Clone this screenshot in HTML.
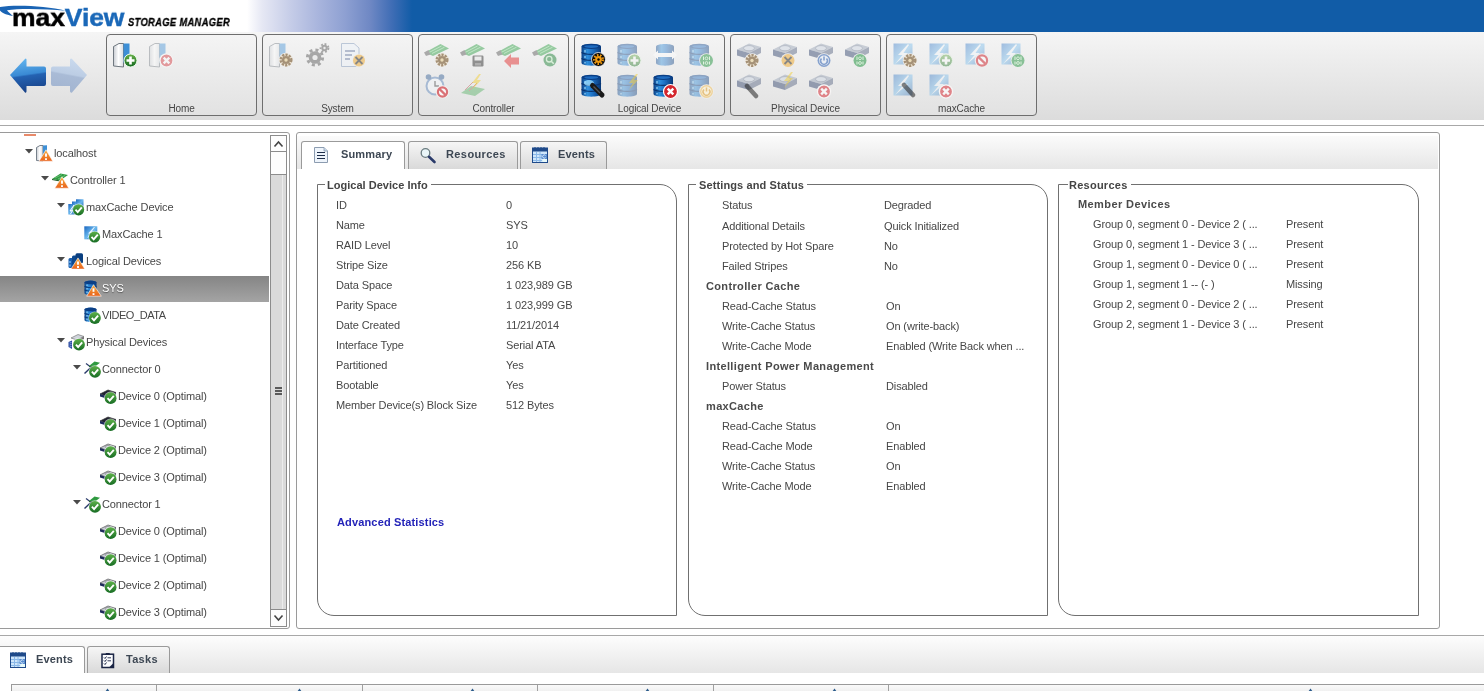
<!DOCTYPE html><html><head><meta charset="utf-8"><title>maxView Storage Manager</title>
<style>
html,body{margin:0;padding:0;}
body{width:1484px;height:691px;overflow:hidden;position:relative;background:#fff;font-family:"Liberation Sans",sans-serif;}
.a{position:absolute;box-sizing:border-box;}
.t{position:absolute;line-height:0;white-space:nowrap;font-family:"Liberation Sans",sans-serif;will-change:transform;}
.ic{position:absolute;overflow:visible;}
</style></head><body>
<svg width="0" height="0" style="position:absolute">
<defs>
<linearGradient id="gdb" x1="0" x2="1" y1="0" y2="0"><stop offset="0" stop-color="#0a3f85"/><stop offset=".3" stop-color="#2f8fdc"/><stop offset=".55" stop-color="#1e72c6"/><stop offset="1" stop-color="#083878"/></linearGradient>
<linearGradient id="gtile" x1="0" x2="1" y1="0" y2="1"><stop offset="0" stop-color="#1a66c0"/><stop offset=".5" stop-color="#6ab8ee"/><stop offset="1" stop-color="#1a5aa8"/></linearGradient>
<linearGradient id="gdoor" x1="0" x2="1" y1="0" y2="0"><stop offset="0" stop-color="#c8ccd2"/><stop offset=".5" stop-color="#ffffff"/><stop offset="1" stop-color="#d8dce0"/></linearGradient>
<linearGradient id="ggreen" x1="0" x2="0" y1="0" y2="1"><stop offset="0" stop-color="#6ab04a"/><stop offset="1" stop-color="#146a20"/></linearGradient>
<linearGradient id="gchk" x1="0" x2="0" y1="0" y2="1"><stop offset="0" stop-color="#5cb048"/><stop offset="1" stop-color="#176c24"/></linearGradient>
<linearGradient id="gwarn" x1="0" x2="0" y1="0" y2="1"><stop offset="0" stop-color="#f8b040"/><stop offset="1" stop-color="#e8601a"/></linearGradient>
<linearGradient id="gback" x1="0.45" x2="0.6" y1="0" y2="1"><stop offset="0" stop-color="#62b4ee"/><stop offset=".45" stop-color="#3a8ad4"/><stop offset=".5" stop-color="#2462b2"/><stop offset="1" stop-color="#173f84"/></linearGradient>
<linearGradient id="gfwd" x1="0.6" x2="0.4" y1="0" y2="1"><stop offset="0" stop-color="#cadaee"/><stop offset=".45" stop-color="#bccde4"/><stop offset=".5" stop-color="#a9bbd6"/><stop offset="1" stop-color="#a2b4d0"/></linearGradient>
</defs></svg>

<div class="a" style="left:0;top:0;width:1484px;height:32px;background:linear-gradient(to right,#fff 0,#fff 247px,#e6e8f4 262px,#c6cde8 290px,#a9b5dd 318px,#8ea0d2 345px,#6f88c4 370px,#3f6db5 392px,#115ca7 412px,#115ca7 100%)"></div>
<svg class="ic" style="left:0;top:5px" width="80" height="14" viewBox="0 0 80 14"><path d="M0 2 C16 -0.5 46 1 66 5.8 C46 3.8 20 3.2 7 5.2 C8.5 7 10.5 9 13 11 C5 9.5 1.5 7.5 0 5.5 Z" fill="#1a64b4"/></svg>
<div class="t" style="left:12px;top:17px;font-size:26px;font-weight:bold;color:#000;letter-spacing:-0.1px;-webkit-text-stroke-width:0.5px;transform:scale(1.02,0.95);transform-origin:0 9px">max<span style="color:#1a68b8">View</span></div>
<div class="t" style="left:128px;top:22px;font-size:11px;font-weight:bold;font-style:italic;color:#000;-webkit-text-stroke-width:0.3px;letter-spacing:0.4px;transform:scaleX(0.85);transform-origin:0 0">STORAGE MANAGER</div>
<div class="a" style="left:0;top:32px;width:1484px;height:88px;background:linear-gradient(#f5f5f5,#dcdcdc)"></div>
<div class="a" style="left:0;top:125px;width:1484px;height:1px;background:#a8a8a8"></div>
<svg class="ic" style="left:9px;top:58px" width="80" height="36" viewBox="0 0 80 36"><path d="M1 17 L16 1 Q17 0 17.5 1.5 L17.5 8.5 L35 8.5 Q37 8.5 37 10.5 L37 26 Q37 28 35 28 L17.5 28 L17.5 33.5 Q17 35.5 16 34.5 Z" fill="url(#gback)"/><path d="M42 10.5 Q42 8.5 44 8.5 L61 8.5 L61 1.5 Q62 0 63 1 L78 17 L63 34.5 Q62 35.5 61 33.5 L61 28 L44 28 Q42 28 42 26 Z" fill="url(#gfwd)"/></svg>
<div class="a" style="left:106px;top:34px;width:151px;height:82px;border:1px solid #6e6e6e;border-radius:4px;background:linear-gradient(#f4f4f4,#e2e2e2)"></div>
<div class="t" style="left:106px;top:109px;width:151px;text-align:center;font-size:10px;letter-spacing:-0.12px;color:#454545">Home</div>
<div class="a" style="left:262px;top:34px;width:151px;height:82px;border:1px solid #6e6e6e;border-radius:4px;background:linear-gradient(#f4f4f4,#e2e2e2)"></div>
<div class="t" style="left:262px;top:109px;width:151px;text-align:center;font-size:10px;letter-spacing:-0.12px;color:#454545">System</div>
<div class="a" style="left:418px;top:34px;width:151px;height:82px;border:1px solid #6e6e6e;border-radius:4px;background:linear-gradient(#f4f4f4,#e2e2e2)"></div>
<div class="t" style="left:418px;top:109px;width:151px;text-align:center;font-size:10px;letter-spacing:-0.12px;color:#454545">Controller</div>
<div class="a" style="left:574px;top:34px;width:151px;height:82px;border:1px solid #6e6e6e;border-radius:4px;background:linear-gradient(#f4f4f4,#e2e2e2)"></div>
<div class="t" style="left:574px;top:109px;width:151px;text-align:center;font-size:10px;letter-spacing:-0.12px;color:#454545">Logical Device</div>
<div class="a" style="left:730px;top:34px;width:151px;height:82px;border:1px solid #6e6e6e;border-radius:4px;background:linear-gradient(#f4f4f4,#e2e2e2)"></div>
<div class="t" style="left:730px;top:109px;width:151px;text-align:center;font-size:10px;letter-spacing:-0.12px;color:#454545">Physical Device</div>
<div class="a" style="left:886px;top:34px;width:151px;height:82px;border:1px solid #6e6e6e;border-radius:4px;background:linear-gradient(#f4f4f4,#e2e2e2)"></div>
<div class="t" style="left:886px;top:109px;width:151px;text-align:center;font-size:10px;letter-spacing:-0.12px;color:#454545">maxCache</div>
<svg class="ic" style="left:113px;top:43px" width="24" height="24" viewBox="0 0 24 24"><g opacity="1"><path d="M0.5 3.5 L6 0.5 L10.5 0.5 L10.5 24 L0.5 23 Z" fill="url(#gdoor)" stroke="#707880" stroke-width="1"/><path d="M10.5 0.5 L16.5 0.5 L16.5 17 L10.5 20 Z" fill="#3d8fd6"/></g><g opacity="1"><circle cx="17.5" cy="17.5" r="6.5" fill="url(#ggreen)" stroke="#e8f8e8" stroke-width="1"/><path d="M13.5 17.5 H21.5 M17.5 13.5 V21.5" stroke="#fff" stroke-width="2.6"/></g></svg>
<svg class="ic" style="left:149px;top:43px" width="24" height="24" viewBox="0 0 24 24"><g opacity="0.42"><path d="M0.5 3.5 L6 0.5 L10.5 0.5 L10.5 24 L0.5 23 Z" fill="url(#gdoor)" stroke="#707880" stroke-width="1"/><path d="M10.5 0.5 L16.5 0.5 L16.5 17 L10.5 20 Z" fill="#3d8fd6"/></g><circle cx="17.5" cy="17.5" r="7.3" fill="#ededed"/><g opacity="0.42"><circle cx="17.5" cy="17.5" r="6.5" fill="#d4262e" stroke="#fff" stroke-width="1.2"/><path d="M14.7 14.7 L20.3 20.3 M20.3 14.7 L14.7 20.3" stroke="#fff" stroke-width="2.4"/></g></svg>
<svg class="ic" style="left:269px;top:43px" width="24" height="24" viewBox="0 0 24 24"><g opacity="0.42"><path d="M0.5 3.5 L6 0.5 L10.5 0.5 L10.5 24 L0.5 23 Z" fill="url(#gdoor)" stroke="#707880" stroke-width="1"/><path d="M10.5 0.5 L16.5 0.5 L16.5 17 L10.5 20 Z" fill="#3d8fd6"/></g><circle cx="17" cy="17" r="7.3" fill="#ededed"/><g opacity="0.62"><circle cx="17" cy="17" r="6.5" fill="#f0d8b0" opacity=".7"/><circle cx="17" cy="17" r="5.3" fill="none" stroke="#7a5a30" stroke-width="2.4" stroke-dasharray="2.2 1.2"/><circle cx="17" cy="17" r="4.1" fill="#7a5a30"/><circle cx="17" cy="17" r="1.7" fill="#e9d29a"/></g></svg>
<svg class="ic" style="left:305px;top:43px" width="24" height="24" viewBox="0 0 24 24"><g opacity="0.54"><circle cx="10" cy="14.5" r="6.3" fill="#6a6a6a"/><circle cx="10" cy="14.5" r="7.6" fill="none" stroke="#6a6a6a" stroke-width="3" stroke-dasharray="3 3"/><circle cx="10" cy="14.5" r="2.6" fill="#e8e8e8"/><circle cx="19.5" cy="5" r="3.2" fill="#6a6a6a"/><circle cx="19.5" cy="5" r="3.9" fill="none" stroke="#6a6a6a" stroke-width="2" stroke-dasharray="1.8 1.8"/><circle cx="19.5" cy="5" r="1.2" fill="#e8e8e8"/></g></svg>
<svg class="ic" style="left:341px;top:43px" width="24" height="24" viewBox="0 0 24 24"><g opacity="0.52"><path d="M0.5 0.5 H13 L18 5 V23.5 H0.5 Z" fill="#eef3fa" stroke="#8aa0c0" stroke-width="1"/><path d="M4 8 H14 M4 12 H11 M4 16 H9" stroke="#5a6e98" stroke-width="1.5"/></g><circle cx="18" cy="17.5" r="6.8" fill="#ededed"/><g opacity="0.57"><circle cx="18" cy="17.5" r="6" fill="#f0b040"/><path d="M14.5 14.0 L21.5 21.0 M21.5 14.0 L14.5 21.0" stroke="#3a3a3a" stroke-width="1.8"/></g></svg>
<svg class="ic" style="left:425px;top:43px" width="24" height="24" viewBox="0 0 24 24"><g opacity="0.52"><path d="M0 9.5 L15.5 1 L24 5.5 L8 13 Z" fill="#44a858"/><path d="M4 9.5 L16.5 3 M7 10.5 L19.5 4.2" stroke="#a8e8b0" stroke-width=".8"/><path d="M-1 9.5 L3.5 7 L5.5 11.5 L1 13 Z" fill="#6a6a6a"/></g><circle cx="17" cy="17" r="7.3" fill="#ededed"/><g opacity="0.62"><circle cx="17" cy="17" r="6.5" fill="#f0d8b0" opacity=".7"/><circle cx="17" cy="17" r="5.3" fill="none" stroke="#7a5a30" stroke-width="2.4" stroke-dasharray="2.2 1.2"/><circle cx="17" cy="17" r="4.1" fill="#7a5a30"/><circle cx="17" cy="17" r="1.7" fill="#e9d29a"/></g></svg>
<svg class="ic" style="left:461px;top:43px" width="24" height="24" viewBox="0 0 24 24"><g opacity="0.52"><path d="M0 9.5 L15.5 1 L24 5.5 L8 13 Z" fill="#44a858"/><path d="M4 9.5 L16.5 3 M7 10.5 L19.5 4.2" stroke="#a8e8b0" stroke-width=".8"/><path d="M-1 9.5 L3.5 7 L5.5 11.5 L1 13 Z" fill="#6a6a6a"/></g><g opacity="0.52"><rect x="11.5" y="12.5" width="11" height="11" rx="1.2" fill="#3a3a3a"/><rect x="13.5" y="13.5" width="7" height="4" fill="#e8e8e8"/><rect x="14" y="20" width="6" height="2.5" fill="#777"/></g></svg>
<svg class="ic" style="left:497px;top:43px" width="24" height="24" viewBox="0 0 24 24"><g opacity="0.52"><path d="M0 9.5 L15.5 1 L24 5.5 L8 13 Z" fill="#44a858"/><path d="M4 9.5 L16.5 3 M7 10.5 L19.5 4.2" stroke="#a8e8b0" stroke-width=".8"/><path d="M-1 9.5 L3.5 7 L5.5 11.5 L1 13 Z" fill="#6a6a6a"/></g><g opacity="0.52"><path d="M7 18 L14 11 L14 14.5 L22 14.5 L22 21.5 L14 21.5 L14 25 Z" fill="#e23a3a"/></g></svg>
<svg class="ic" style="left:533px;top:43px" width="24" height="24" viewBox="0 0 24 24"><g opacity="0.52"><path d="M0 9.5 L15.5 1 L24 5.5 L8 13 Z" fill="#44a858"/><path d="M4 9.5 L16.5 3 M7 10.5 L19.5 4.2" stroke="#a8e8b0" stroke-width=".8"/><path d="M-1 9.5 L3.5 7 L5.5 11.5 L1 13 Z" fill="#6a6a6a"/></g><circle cx="17" cy="17" r="7.3" fill="#ededed"/><g opacity="0.52"><circle cx="17" cy="17" r="6.5" fill="#2e8a46"/><circle cx="16.2" cy="16.2" r="2.8" fill="none" stroke="#c8f0c8" stroke-width="1.3"/><path d="M18.2 18.2 L20.8 20.8" stroke="#c8f0c8" stroke-width="1.6"/></g></svg>
<svg class="ic" style="left:425px;top:74px" width="24" height="24" viewBox="0 0 24 24"><g opacity="0.52"><circle cx="10" cy="12" r="8.5" fill="#f4f8fc" stroke="#6a90c0" stroke-width="2"/><path d="M10 7 V12 H14" stroke="#555" stroke-width="1.4" fill="none"/><circle cx="3.5" cy="3" r="2.8" fill="#4a70a0"/><circle cx="16.5" cy="3" r="2.8" fill="#4a70a0"/></g><circle cx="17.5" cy="18" r="6.8" fill="#ededed"/><g opacity="0.62"><circle cx="17.5" cy="18" r="6" fill="#fff"/><circle cx="17.5" cy="18" r="4.6" fill="none" stroke="#d0262e" stroke-width="2.2"/><path d="M14.1 14.6 L20.9 21.4" stroke="#d0262e" stroke-width="2.2"/></g></svg>
<svg class="ic" style="left:461px;top:74px" width="24" height="24" viewBox="0 0 24 24"><g opacity="0.42"><path d="M0 19 L10 12 L24 15 L14 22 Z" fill="#4cae5c"/><path d="M4 16 L12 8 M8 17 L16 9" stroke="#c04a4a" stroke-width="1"/></g><g opacity="0.52"><path d="M18 0 L11 9 L15 9 L11 16 L20 6 L16 6 L20 0 Z" fill="#f2d040"/></g></svg>
<svg class="ic" style="left:581px;top:43px" width="24" height="24" viewBox="0 0 24 24"><g opacity="1"><path d="M0.5 3.5 C0.5 0 20 0 20 3.5 V20 C20 23.5 0.5 23.5 0.5 20 Z" fill="url(#gdb)"/><ellipse cx="10.25" cy="3.3" rx="9.5" ry="2.6" fill="#0b3f86"/><ellipse cx="10.25" cy="3.6" rx="7" ry="1.4" fill="#1f6cc0"/><path d="M0.5 9.5 C4 12 16.5 12 20 9.5 M0.5 15.5 C4 18 16.5 18 20 15.5" stroke="#0a3470" stroke-width="1.3" fill="none"/><path d="M4 7 V9.5 M4 13 V15 M4 19 V20.5" stroke="#9fdcff" stroke-width="1.6" opacity=".7"/></g><g opacity="1"><circle cx="17.5" cy="16.5" r="7" fill="#0a0a0a" stroke="#fff" stroke-width=".8"/><circle cx="17.5" cy="16.5" r="4.4" fill="none" stroke="#f09a10" stroke-width="2.2" stroke-dasharray="1.6 1.5"/><circle cx="17.5" cy="16.5" r="3.4" fill="#f09a10"/><circle cx="17.5" cy="16.5" r="1.2" fill="#0a0a0a"/></g></svg>
<svg class="ic" style="left:617px;top:43px" width="24" height="24" viewBox="0 0 24 24"><g opacity="0.42"><path d="M0.5 3.5 C0.5 0 20 0 20 3.5 V20 C20 23.5 0.5 23.5 0.5 20 Z" fill="url(#gdb)"/><ellipse cx="10.25" cy="3.3" rx="9.5" ry="2.6" fill="#0b3f86"/><ellipse cx="10.25" cy="3.6" rx="7" ry="1.4" fill="#1f6cc0"/><path d="M0.5 9.5 C4 12 16.5 12 20 9.5 M0.5 15.5 C4 18 16.5 18 20 15.5" stroke="#0a3470" stroke-width="1.3" fill="none"/><path d="M4 7 V9.5 M4 13 V15 M4 19 V20.5" stroke="#9fdcff" stroke-width="1.6" opacity=".7"/></g><circle cx="17.5" cy="17.5" r="7.3" fill="#ededed"/><g opacity="0.42"><circle cx="17.5" cy="17.5" r="6.5" fill="url(#ggreen)" stroke="#e8f8e8" stroke-width="1"/><path d="M13.5 17.5 H21.5 M17.5 13.5 V21.5" stroke="#fff" stroke-width="2.6"/></g></svg>
<svg class="ic" style="left:653px;top:43px" width="24" height="24" viewBox="0 0 24 24"><g opacity="0.42"><path d="M3 3.5 C3 0 21 0 21 3.5 V20 C21 23.5 3 23.5 3 20 Z" fill="url(#gdb)"/><path d="M0 12 L5 7.5 L5 10 L19 10 L19 7.5 L24 12 L19 16.5 L19 14 L5 14 L5 16.5 Z" fill="#fff"/></g></svg>
<svg class="ic" style="left:689px;top:43px" width="24" height="24" viewBox="0 0 24 24"><g opacity="0.42"><path d="M0.5 3.5 C0.5 0 20 0 20 3.5 V20 C20 23.5 0.5 23.5 0.5 20 Z" fill="url(#gdb)"/><ellipse cx="10.25" cy="3.3" rx="9.5" ry="2.6" fill="#0b3f86"/><ellipse cx="10.25" cy="3.6" rx="7" ry="1.4" fill="#1f6cc0"/><path d="M0.5 9.5 C4 12 16.5 12 20 9.5 M0.5 15.5 C4 18 16.5 18 20 15.5" stroke="#0a3470" stroke-width="1.3" fill="none"/><path d="M4 7 V9.5 M4 13 V15 M4 19 V20.5" stroke="#9fdcff" stroke-width="1.6" opacity=".7"/></g><circle cx="17.5" cy="17.5" r="7.3" fill="#ededed"/><g opacity="0.52"><circle cx="17.5" cy="17.5" r="6.5" fill="#2e9a4a"/><path d="M14.5 13.5 V17.0 M20.5 13.5 V17.0 M14.5 18.5 V21.5 M20.5 18.5 V21.5" stroke="#d8f8d8" stroke-width="1"/><circle cx="17.5" cy="15.3" r="1.4" fill="none" stroke="#d8f8d8" stroke-width=".9"/><circle cx="17.5" cy="20.0" r="1.4" fill="none" stroke="#d8f8d8" stroke-width=".9"/></g></svg>
<svg class="ic" style="left:581px;top:74px" width="24" height="24" viewBox="0 0 24 24"><g opacity="1"><path d="M0.5 3.5 C0.5 0 20 0 20 3.5 V20 C20 23.5 0.5 23.5 0.5 20 Z" fill="url(#gdb)"/><ellipse cx="10.25" cy="3.3" rx="9.5" ry="2.6" fill="#0b3f86"/><ellipse cx="10.25" cy="3.6" rx="7" ry="1.4" fill="#1f6cc0"/><path d="M0.5 9.5 C4 12 16.5 12 20 9.5 M0.5 15.5 C4 18 16.5 18 20 15.5" stroke="#0a3470" stroke-width="1.3" fill="none"/><path d="M4 7 V9.5 M4 13 V15 M4 19 V20.5" stroke="#9fdcff" stroke-width="1.6" opacity=".7"/></g><ellipse cx="8" cy="9" rx="5" ry="3" fill="#a8e4ff" opacity=".7"/><g opacity="1"><path d="M11.5 11.5 L21 21" stroke="#1a1a1a" stroke-width="5" stroke-linecap="round"/><path d="M12.5 12.5 L19 19" stroke="#555" stroke-width="1.2"/></g></svg>
<svg class="ic" style="left:617px;top:74px" width="24" height="24" viewBox="0 0 24 24"><g opacity="0.42"><path d="M0.5 3.5 C0.5 0 20 0 20 3.5 V20 C20 23.5 0.5 23.5 0.5 20 Z" fill="url(#gdb)"/><ellipse cx="10.25" cy="3.3" rx="9.5" ry="2.6" fill="#0b3f86"/><ellipse cx="10.25" cy="3.6" rx="7" ry="1.4" fill="#1f6cc0"/><path d="M0.5 9.5 C4 12 16.5 12 20 9.5 M0.5 15.5 C4 18 16.5 18 20 15.5" stroke="#0a3470" stroke-width="1.3" fill="none"/><path d="M4 7 V9.5 M4 13 V15 M4 19 V20.5" stroke="#9fdcff" stroke-width="1.6" opacity=".7"/></g><g opacity="0.52"><path d="M19 0 L12 9 L16 9 L12 16 L21 6 L17 6 L21 0 Z" fill="#f2d040"/></g></svg>
<svg class="ic" style="left:653px;top:74px" width="24" height="24" viewBox="0 0 24 24"><g opacity="1"><path d="M0.5 3.5 C0.5 0 20 0 20 3.5 V20 C20 23.5 0.5 23.5 0.5 20 Z" fill="url(#gdb)"/><ellipse cx="10.25" cy="3.3" rx="9.5" ry="2.6" fill="#0b3f86"/><ellipse cx="10.25" cy="3.6" rx="7" ry="1.4" fill="#1f6cc0"/><path d="M0.5 9.5 C4 12 16.5 12 20 9.5 M0.5 15.5 C4 18 16.5 18 20 15.5" stroke="#0a3470" stroke-width="1.3" fill="none"/><path d="M4 7 V9.5 M4 13 V15 M4 19 V20.5" stroke="#9fdcff" stroke-width="1.6" opacity=".7"/></g><g opacity="1"><circle cx="17.5" cy="17.5" r="7" fill="#d4262e" stroke="#fff" stroke-width="1.2"/><path d="M14.7 14.7 L20.3 20.3 M20.3 14.7 L14.7 20.3" stroke="#fff" stroke-width="2.4"/></g></svg>
<svg class="ic" style="left:689px;top:74px" width="24" height="24" viewBox="0 0 24 24"><g opacity="0.42"><path d="M0.5 3.5 C0.5 0 20 0 20 3.5 V20 C20 23.5 0.5 23.5 0.5 20 Z" fill="url(#gdb)"/><ellipse cx="10.25" cy="3.3" rx="9.5" ry="2.6" fill="#0b3f86"/><ellipse cx="10.25" cy="3.6" rx="7" ry="1.4" fill="#1f6cc0"/><path d="M0.5 9.5 C4 12 16.5 12 20 9.5 M0.5 15.5 C4 18 16.5 18 20 15.5" stroke="#0a3470" stroke-width="1.3" fill="none"/><path d="M4 7 V9.5 M4 13 V15 M4 19 V20.5" stroke="#9fdcff" stroke-width="1.6" opacity=".7"/></g><circle cx="17.5" cy="17.5" r="7.3" fill="#ededed"/><g opacity="0.57"><circle cx="17.5" cy="17.5" r="6.5" fill="#f0c060"/><circle cx="17.5" cy="17.5" r="5.0" fill="#fff3d0"/><path d="M15.0 15.5 A3.4 3.4 0 1 0 20.0 15.5 M17.5 13.5 V17.5" stroke="#e0a030" stroke-width="1.5" fill="none"/></g></svg>
<svg class="ic" style="left:737px;top:43px" width="24" height="24" viewBox="0 0 24 24"><g opacity="0.54" transform="translate(0,-2)"><path d="M0 8.5 L12 2.5 L24 6 L12 12 Z" fill="#a4aebe"/><path d="M0 8.5 L12 12 L12 18 L0 14.5 Z" fill="#4a5a7e"/><path d="M12 12 L24 6 L24 12 L12 18 Z" fill="#6c7892"/><ellipse cx="12" cy="7.2" rx="5.5" ry="2.6" fill="#d0d8e4" stroke="#7c869a" stroke-width=".8"/></g><circle cx="15" cy="17.5" r="7.3" fill="#ededed"/><g opacity="0.62"><circle cx="15" cy="17.5" r="6.5" fill="#f0d8b0" opacity=".7"/><circle cx="15" cy="17.5" r="5.3" fill="none" stroke="#7a5a30" stroke-width="2.4" stroke-dasharray="2.2 1.2"/><circle cx="15" cy="17.5" r="4.1" fill="#7a5a30"/><circle cx="15" cy="17.5" r="1.7" fill="#e9d29a"/></g></svg>
<svg class="ic" style="left:773px;top:43px" width="24" height="24" viewBox="0 0 24 24"><g opacity="0.54" transform="translate(0,-2)"><path d="M0 8.5 L12 2.5 L24 6 L12 12 Z" fill="#a4aebe"/><path d="M0 8.5 L12 12 L12 18 L0 14.5 Z" fill="#4a5a7e"/><path d="M12 12 L24 6 L24 12 L12 18 Z" fill="#6c7892"/><ellipse cx="12" cy="7.2" rx="5.5" ry="2.6" fill="#d0d8e4" stroke="#7c869a" stroke-width=".8"/></g><circle cx="15" cy="17.5" r="7.3" fill="#ededed"/><g opacity="0.57"><circle cx="15" cy="17.5" r="6.5" fill="#f0b040"/><path d="M11.5 14.0 L18.5 21.0 M18.5 14.0 L11.5 21.0" stroke="#3a3a3a" stroke-width="1.8"/></g></svg>
<svg class="ic" style="left:809px;top:43px" width="24" height="24" viewBox="0 0 24 24"><g opacity="0.54" transform="translate(0,-2)"><path d="M0 8.5 L12 2.5 L24 6 L12 12 Z" fill="#a4aebe"/><path d="M0 8.5 L12 12 L12 18 L0 14.5 Z" fill="#4a5a7e"/><path d="M12 12 L24 6 L24 12 L12 18 Z" fill="#6c7892"/><ellipse cx="12" cy="7.2" rx="5.5" ry="2.6" fill="#d0d8e4" stroke="#7c869a" stroke-width=".8"/></g><circle cx="15" cy="17.5" r="7.3" fill="#ededed"/><g opacity="0.57"><circle cx="15" cy="17.5" r="6.5" fill="#3a6ab8"/><circle cx="15" cy="17.5" r="5.0" fill="#e8f0fa"/><path d="M12.5 15.5 A3.4 3.4 0 1 0 17.5 15.5 M15 13.5 V17.5" stroke="#3a6ab8" stroke-width="1.6" fill="none"/></g></svg>
<svg class="ic" style="left:845px;top:43px" width="24" height="24" viewBox="0 0 24 24"><g opacity="0.54" transform="translate(0,-2)"><path d="M0 8.5 L12 2.5 L24 6 L12 12 Z" fill="#a4aebe"/><path d="M0 8.5 L12 12 L12 18 L0 14.5 Z" fill="#4a5a7e"/><path d="M12 12 L24 6 L24 12 L12 18 Z" fill="#6c7892"/><ellipse cx="12" cy="7.2" rx="5.5" ry="2.6" fill="#d0d8e4" stroke="#7c869a" stroke-width=".8"/></g><circle cx="15" cy="17.5" r="7.3" fill="#ededed"/><g opacity="0.57"><circle cx="15" cy="17.5" r="6.5" fill="#2e9a4a"/><path d="M12 13.5 V17.0 M18 13.5 V17.0 M12 18.5 V21.5 M18 18.5 V21.5" stroke="#d8f8d8" stroke-width="1"/><circle cx="15" cy="15.3" r="1.4" fill="none" stroke="#d8f8d8" stroke-width=".9"/><circle cx="15" cy="20.0" r="1.4" fill="none" stroke="#d8f8d8" stroke-width=".9"/></g></svg>
<svg class="ic" style="left:737px;top:74px" width="24" height="24" viewBox="0 0 24 24"><g opacity="0.54" transform="translate(0,-2)"><path d="M0 8.5 L12 2.5 L24 6 L12 12 Z" fill="#a4aebe"/><path d="M0 8.5 L12 12 L12 18 L0 14.5 Z" fill="#4a5a7e"/><path d="M12 12 L24 6 L24 12 L12 18 Z" fill="#6c7892"/><ellipse cx="12" cy="7.2" rx="5.5" ry="2.6" fill="#d0d8e4" stroke="#7c869a" stroke-width=".8"/></g><g opacity="0.57"><path d="M10 12 L19 22" stroke="#2a2a2a" stroke-width="4.5" stroke-linecap="round"/></g></svg>
<svg class="ic" style="left:773px;top:74px" width="24" height="24" viewBox="0 0 24 24"><g opacity="0.54" transform="translate(0,-2)"><path d="M0 8.5 L12 2.5 L24 6 L12 12 Z" fill="#a4aebe"/><path d="M0 8.5 L12 12 L12 18 L0 14.5 Z" fill="#4a5a7e"/><path d="M12 12 L24 6 L24 12 L12 18 Z" fill="#6c7892"/><ellipse cx="12" cy="7.2" rx="5.5" ry="2.6" fill="#d0d8e4" stroke="#7c869a" stroke-width=".8"/></g><g opacity="0.52"><path d="M18 -2 L11 7 L15 7 L11 14 L20 4 L16 4 L20 -2 Z" fill="#f2d040"/></g></svg>
<svg class="ic" style="left:809px;top:74px" width="24" height="24" viewBox="0 0 24 24"><g opacity="0.54" transform="translate(0,-2)"><path d="M0 8.5 L12 2.5 L24 6 L12 12 Z" fill="#a4aebe"/><path d="M0 8.5 L12 12 L12 18 L0 14.5 Z" fill="#4a5a7e"/><path d="M12 12 L24 6 L24 12 L12 18 Z" fill="#6c7892"/><ellipse cx="12" cy="7.2" rx="5.5" ry="2.6" fill="#d0d8e4" stroke="#7c869a" stroke-width=".8"/></g><circle cx="15" cy="17.5" r="7.3" fill="#ededed"/><g opacity="0.52"><circle cx="15" cy="17.5" r="6.5" fill="#d4262e" stroke="#fff" stroke-width="1.2"/><path d="M12.2 14.7 L17.8 20.3 M17.8 14.7 L12.2 20.3" stroke="#fff" stroke-width="2.4"/></g></svg>
<svg class="ic" style="left:893px;top:43px" width="24" height="24" viewBox="0 0 24 24"><g opacity="0.38"><rect x="0.5" y="0.5" width="19" height="21" fill="url(#gtile)"/><path d="M15 1 L5 12 L9.5 12 L2 21 L15 10 L10.5 10 L16 2 Z" fill="#fff" opacity=".9"/></g><circle cx="17" cy="17.5" r="7.3" fill="#ededed"/><g opacity="0.62"><circle cx="17" cy="17.5" r="6.5" fill="#f0d8b0" opacity=".7"/><circle cx="17" cy="17.5" r="5.3" fill="none" stroke="#7a5a30" stroke-width="2.4" stroke-dasharray="2.2 1.2"/><circle cx="17" cy="17.5" r="4.1" fill="#7a5a30"/><circle cx="17" cy="17.5" r="1.7" fill="#e9d29a"/></g></svg>
<svg class="ic" style="left:929px;top:43px" width="24" height="24" viewBox="0 0 24 24"><g opacity="0.38"><rect x="0.5" y="0.5" width="19" height="21" fill="url(#gtile)"/><path d="M15 1 L5 12 L9.5 12 L2 21 L15 10 L10.5 10 L16 2 Z" fill="#fff" opacity=".9"/></g><circle cx="17" cy="17.5" r="7.3" fill="#ededed"/><g opacity="0.42"><circle cx="17" cy="17.5" r="6.5" fill="url(#ggreen)" stroke="#e8f8e8" stroke-width="1"/><path d="M13 17.5 H21 M17 13.5 V21.5" stroke="#fff" stroke-width="2.6"/></g></svg>
<svg class="ic" style="left:965px;top:43px" width="24" height="24" viewBox="0 0 24 24"><g opacity="0.38"><rect x="0.5" y="0.5" width="19" height="21" fill="url(#gtile)"/><path d="M15 1 L5 12 L9.5 12 L2 21 L15 10 L10.5 10 L16 2 Z" fill="#fff" opacity=".9"/></g><circle cx="17" cy="17.5" r="7.3" fill="#ededed"/><g opacity="0.52"><circle cx="17" cy="17.5" r="6.5" fill="#fff"/><circle cx="17" cy="17.5" r="5.1" fill="none" stroke="#d0262e" stroke-width="2.2"/><path d="M13.6 14.1 L20.4 20.9" stroke="#d0262e" stroke-width="2.2"/></g></svg>
<svg class="ic" style="left:1001px;top:43px" width="24" height="24" viewBox="0 0 24 24"><g opacity="0.38"><rect x="0.5" y="0.5" width="19" height="21" fill="url(#gtile)"/><path d="M15 1 L5 12 L9.5 12 L2 21 L15 10 L10.5 10 L16 2 Z" fill="#fff" opacity=".9"/></g><circle cx="17" cy="17.5" r="7.3" fill="#ededed"/><g opacity="0.52"><circle cx="17" cy="17.5" r="6.5" fill="#2e9a4a"/><path d="M14 13.5 V17.0 M20 13.5 V17.0 M14 18.5 V21.5 M20 18.5 V21.5" stroke="#d8f8d8" stroke-width="1"/><circle cx="17" cy="15.3" r="1.4" fill="none" stroke="#d8f8d8" stroke-width=".9"/><circle cx="17" cy="20.0" r="1.4" fill="none" stroke="#d8f8d8" stroke-width=".9"/></g></svg>
<svg class="ic" style="left:893px;top:74px" width="24" height="24" viewBox="0 0 24 24"><g opacity="0.38"><rect x="0.5" y="0.5" width="19" height="21" fill="url(#gtile)"/><path d="M15 1 L5 12 L9.5 12 L2 21 L15 10 L10.5 10 L16 2 Z" fill="#fff" opacity=".9"/></g><g opacity="0.57"><path d="M11 11 L20 21" stroke="#2a2a2a" stroke-width="4.5" stroke-linecap="round"/></g></svg>
<svg class="ic" style="left:929px;top:74px" width="24" height="24" viewBox="0 0 24 24"><g opacity="0.38"><rect x="0.5" y="0.5" width="19" height="21" fill="url(#gtile)"/><path d="M15 1 L5 12 L9.5 12 L2 21 L15 10 L10.5 10 L16 2 Z" fill="#fff" opacity=".9"/></g><circle cx="17" cy="17.5" r="7.3" fill="#ededed"/><g opacity="0.52"><circle cx="17" cy="17.5" r="6.5" fill="#d4262e" stroke="#fff" stroke-width="1.2"/><path d="M14.2 14.7 L19.8 20.3 M19.8 14.7 L14.2 20.3" stroke="#fff" stroke-width="2.4"/></g></svg>
<div class="a" style="left:-3px;top:132px;width:293px;height:497px;border:1px solid #9a9a9a;border-radius:3px;background:#fff"></div>
<div class="a" style="left:24px;top:134px;width:12px;height:2px;background:#e88a6a"></div>
<div class="a" style="left:270px;top:135px;width:17px;height:492px;border:1px solid #8c8c8c;background:#fdfdfd"></div>
<div class="a" style="left:270px;top:151px;width:17px;height:1px;background:#8c8c8c"></div>
<div class="a" style="left:270px;top:174px;width:17px;height:436px;border:1px solid #8c8c8c;background:linear-gradient(to right,#dadada 0,#dadada 11px,#ececec 11px,#ececec 12px,#dadada 12px)"></div>
<svg class="ic" style="left:273px;top:140px" width="11" height="8" viewBox="0 0 11 8"><path d="M1.5 6.5 L5.5 2 L9.5 6.5" stroke="#444" stroke-width="1.6" fill="none"/></svg>
<svg class="ic" style="left:273px;top:614px" width="11" height="8" viewBox="0 0 11 8"><path d="M1.5 1.5 L5.5 6 L9.5 1.5" stroke="#444" stroke-width="1.6" fill="none"/></svg>
<div class="a" style="left:275px;top:387px;width:7px;height:8px;background:repeating-linear-gradient(#5a5a5a 0,#5a5a5a 1.5px,transparent 1.5px,transparent 3px)"></div>
<svg class="ic" style="left:25px;top:149px" width="8" height="5" viewBox="0 0 8 5"><path d="M0 0 H8 L4 4.5 Z" fill="#4a4a4a"/></svg>
<svg class="ic" style="left:36px;top:145px" width="16" height="17" viewBox="0 0 16 17"><path d="M0.5 2.5 L4 0.5 L7 0.5 L7 16 L0.5 15.5 Z" fill="url(#gdoor)" stroke="#6a7480" stroke-width=".9"/><path d="M7 0.5 L11 0.3 L11 7 L7 9 Z" fill="#3d8fd6"/><path d="M10 4.8 L16.8 16.2 L3.0 16.2 Z" fill="url(#gwarn)" stroke="#fff" stroke-width=".6" stroke-linejoin="round"/><path d="M10 8.4 V11.799999999999999" stroke="#fff" stroke-width="1.9"/><path d="M10 13.2 V15.0" stroke="#fff" stroke-width="1.9"/></svg>
<div class="t" style="left:54px;top:153px;font-size:11px;font-weight:normal;color:#474747;letter-spacing:-0.12px;">localhost</div>
<svg class="ic" style="left:41px;top:176px" width="8" height="5" viewBox="0 0 8 5"><path d="M0 0 H8 L4 4.5 Z" fill="#4a4a4a"/></svg>
<svg class="ic" style="left:52px;top:172px" width="16" height="17" viewBox="0 0 16 17"><path d="M0 7 L8.5 1.5 L16 3 L8 8.5 Z" fill="#2f9a40"/><path d="M0 7 L8 8.5 L8 9.5 L0 8 Z" fill="#1a5a24"/><path d="M3 6 L10 2.5 M6 7 L13 3.5" stroke="#8fd89a" stroke-width=".6"/><path d="M10 4.8 L16.8 16.2 L2.7 16.2 Z" fill="url(#gwarn)" stroke="#fff" stroke-width=".6" stroke-linejoin="round"/><path d="M10 8.4 V11.799999999999999" stroke="#fff" stroke-width="1.9"/><path d="M10 13.2 V15.0" stroke="#fff" stroke-width="1.9"/></svg>
<div class="t" style="left:70px;top:180px;font-size:11px;font-weight:normal;color:#474747;letter-spacing:-0.12px;">Controller 1</div>
<svg class="ic" style="left:57px;top:203px" width="8" height="5" viewBox="0 0 8 5"><path d="M0 0 H8 L4 4.5 Z" fill="#4a4a4a"/></svg>
<svg class="ic" style="left:68px;top:199px" width="16" height="17" viewBox="0 0 16 17"><rect x="0.3" y="5" width="8" height="10.5" fill="url(#gtile)"/><rect x="4" y="2.5" width="8" height="10" fill="url(#gtile)"/><rect x="8" y="0.3" width="7.5" height="9.5" fill="url(#gtile)"/><path d="M6 6 L2 12 L4.5 11.5 L2.5 15" stroke="#fff" stroke-width="1" fill="none"/><circle cx="10.6" cy="10.8" r="6.3" fill="#fff" opacity=".6"/><circle cx="10.6" cy="10.8" r="5.6" fill="url(#gchk)"/><path d="M7.5 10.700000000000001 L9.7 13.100000000000001 L13.8 8.4" stroke="#fff" stroke-width="1.9" fill="none"/></svg>
<div class="t" style="left:86px;top:207px;font-size:11px;font-weight:normal;color:#474747;letter-spacing:-0.12px;">maxCache Device</div>
<svg class="ic" style="left:84px;top:226px" width="16" height="17" viewBox="0 0 16 17"><rect x="0.3" y="0.3" width="13" height="13" fill="url(#gtile)"/><path d="M10 1 L4 7.5 L7 7.5 L2 13 L10.5 6 L7.5 6 L11 1 Z" fill="#fff" opacity=".85"/><circle cx="10.6" cy="11" r="6.3" fill="#fff" opacity=".6"/><circle cx="10.6" cy="11" r="5.6" fill="url(#gchk)"/><path d="M7.5 10.9 L9.7 13.3 L13.8 8.6" stroke="#fff" stroke-width="1.9" fill="none"/></svg>
<div class="t" style="left:102px;top:234px;font-size:11px;font-weight:normal;color:#474747;letter-spacing:-0.12px;">MaxCache 1</div>
<svg class="ic" style="left:57px;top:257px" width="8" height="5" viewBox="0 0 8 5"><path d="M0 0 H8 L4 4.5 Z" fill="#4a4a4a"/></svg>
<svg class="ic" style="left:68px;top:253px" width="16" height="17" viewBox="0 0 16 17"><rect x="0.5" y="5" width="7" height="10" rx="1.5" fill="#1a5fb0"/><rect x="4" y="2.5" width="7" height="10" rx="1.5" fill="#0d4a90"/><rect x="7.5" y="0.3" width="7.5" height="10" rx="1.5" fill="#0a3f80"/><path d="M2 8 V10 M2 11.5 V13.5" stroke="#8fd0ff" stroke-width="1.1"/><path d="M10 4.9 L16.8 16.1 L3.0 16.1 Z" fill="url(#gwarn)" stroke="#fff" stroke-width=".6" stroke-linejoin="round"/><path d="M10 8.5 V11.700000000000001" stroke="#fff" stroke-width="1.9"/><path d="M10 13.100000000000001 V14.900000000000002" stroke="#fff" stroke-width="1.9"/></svg>
<div class="t" style="left:86px;top:261px;font-size:11px;font-weight:normal;color:#474747;letter-spacing:-0.12px;">Logical Devices</div>
<div class="a" style="left:0;top:276px;width:269px;height:26px;background:linear-gradient(#858585,#a4a4a4)"></div>
<svg class="ic" style="left:84px;top:280px" width="16" height="17" viewBox="0 0 16 17"><path d="M0.5 2.5 C0.5 0 12.5 0 12.5 2.5 V13 C12.5 15.5 0.5 15.5 0.5 13 Z" fill="url(#gdb)"/><ellipse cx="6.5" cy="2.4" rx="6" ry="1.8" fill="#0b3f86"/><path d="M0.5 6.5 C3 8 10 8 12.5 6.5 M0.5 10 C3 11.5 10 11.5 12.5 10" stroke="#0a3470" stroke-width=".9" fill="none"/><path d="M3 4.5 V6 M3 8 V9.5 M3 11.5 V13" stroke="#a8e0ff" stroke-width="1.3" opacity=".8"/><path d="M9.5 4.7 L17.3 16.2 L2.7 16.2 Z" fill="url(#gwarn)" stroke="#fff" stroke-width=".6" stroke-linejoin="round"/><path d="M9.5 8.3 V11.799999999999999" stroke="#fff" stroke-width="1.9"/><path d="M9.5 13.2 V15.0" stroke="#fff" stroke-width="1.9"/></svg>
<div class="t" style="left:102px;top:288px;font-size:11px;font-weight:normal;color:#fff;letter-spacing:-0.12px;text-shadow:0 1px 1px #555;">SYS</div>
<svg class="ic" style="left:84px;top:307px" width="16" height="17" viewBox="0 0 16 17"><path d="M0.5 2.5 C0.5 0 12.5 0 12.5 2.5 V13 C12.5 15.5 0.5 15.5 0.5 13 Z" fill="url(#gdb)"/><ellipse cx="6.5" cy="2.4" rx="6" ry="1.8" fill="#0b3f86"/><path d="M0.5 6.5 C3 8 10 8 12.5 6.5 M0.5 10 C3 11.5 10 11.5 12.5 10" stroke="#0a3470" stroke-width=".9" fill="none"/><path d="M3 4.5 V6 M3 8 V9.5 M3 11.5 V13" stroke="#a8e0ff" stroke-width="1.3" opacity=".8"/><circle cx="10.9" cy="11" r="6.6" fill="#fff" opacity=".6"/><circle cx="10.9" cy="11" r="5.8999999999999995" fill="url(#gchk)"/><path d="M7.800000000000001 10.9 L10.0 13.3 L14.100000000000001 8.6" stroke="#fff" stroke-width="1.9" fill="none"/></svg>
<div class="t" style="left:102px;top:315px;font-size:11px;font-weight:normal;color:#474747;letter-spacing:-0.12px;letter-spacing:-0.45px;">VIDEO_DATA</div>
<svg class="ic" style="left:57px;top:338px" width="8" height="5" viewBox="0 0 8 5"><path d="M0 0 H8 L4 4.5 Z" fill="#4a4a4a"/></svg>
<svg class="ic" style="left:68px;top:334px" width="16" height="17" viewBox="0 0 16 17"><path d="M3 4 L10 0.5 L16 2.5 L9 6 Z" fill="#d0d4dc" stroke="#666" stroke-width=".6"/><path d="M9 6 L16 2.5 L16 5 L9 8.5 Z" fill="#777"/><path d="M0.5 8 L4 6.5 L4 15 L0.5 13 Z" fill="#2a4aa0"/><path d="M1.5 9 L3.5 8.5 M1.5 11 L3.5 10.5 M1.5 13 L3.5 12.5" stroke="#c0d0ff" stroke-width=".6"/><circle cx="11" cy="10.7" r="6.6" fill="#fff" opacity=".6"/><circle cx="11" cy="10.7" r="5.8999999999999995" fill="url(#gchk)"/><path d="M7.9 10.6 L10.1 13.0 L14.2 8.299999999999999" stroke="#fff" stroke-width="1.9" fill="none"/></svg>
<div class="t" style="left:86px;top:342px;font-size:11px;font-weight:normal;color:#474747;letter-spacing:-0.12px;">Physical Devices</div>
<svg class="ic" style="left:73px;top:365px" width="8" height="5" viewBox="0 0 8 5"><path d="M0 0 H8 L4 4.5 Z" fill="#4a4a4a"/></svg>
<svg class="ic" style="left:84px;top:361px" width="16" height="17" viewBox="0 0 16 17"><path d="M0.5 12.5 L9 4.5" stroke="#2a3a6a" stroke-width="1.4"/><path d="M2 2.5 L6 5.5" stroke="#2a3a6a" stroke-width="1.2"/><path d="M5 5 L10.5 0.5 L16 1.8 L10.5 6 Z" fill="#2f9a40"/><path d="M5 5 L10.5 6 L10.5 7 L5 6 Z" fill="#1a5a24"/><circle cx="11" cy="10.8" r="6.6" fill="#fff" opacity=".6"/><circle cx="11" cy="10.8" r="5.8999999999999995" fill="url(#gchk)"/><path d="M7.9 10.700000000000001 L10.1 13.100000000000001 L14.2 8.4" stroke="#fff" stroke-width="1.9" fill="none"/></svg>
<div class="t" style="left:102px;top:369px;font-size:11px;font-weight:normal;color:#474747;letter-spacing:-0.12px;">Connector 0</div>
<svg class="ic" style="left:100px;top:388px" width="16" height="17" viewBox="0 0 16 17"><path d="M0 6 L8 2 L16 4.5 L8 8.5 Z" fill="#1e2230" stroke="#333" stroke-width=".7"/><path d="M0 6 L8 8.5 L8 11 L0 8.5 Z" fill="#1c2a5a"/><path d="M8 8.5 L16 4.5 L16 7 L8 11 Z" fill="#3a3f50"/><circle cx="10.6" cy="10.2" r="6.6" fill="#fff" opacity=".6"/><circle cx="10.6" cy="10.2" r="5.8999999999999995" fill="url(#gchk)"/><path d="M7.5 10.1 L9.7 12.5 L13.8 7.799999999999999" stroke="#fff" stroke-width="1.9" fill="none"/></svg>
<div class="t" style="left:118px;top:396px;font-size:11px;font-weight:normal;color:#474747;letter-spacing:-0.12px;">Device 0 (Optimal)</div>
<svg class="ic" style="left:100px;top:415px" width="16" height="17" viewBox="0 0 16 17"><path d="M0 6 L8 2 L16 4.5 L8 8.5 Z" fill="#1e2230" stroke="#333" stroke-width=".7"/><path d="M0 6 L8 8.5 L8 11 L0 8.5 Z" fill="#1c2a5a"/><path d="M8 8.5 L16 4.5 L16 7 L8 11 Z" fill="#3a3f50"/><circle cx="10.6" cy="10.2" r="6.6" fill="#fff" opacity=".6"/><circle cx="10.6" cy="10.2" r="5.8999999999999995" fill="url(#gchk)"/><path d="M7.5 10.1 L9.7 12.5 L13.8 7.799999999999999" stroke="#fff" stroke-width="1.9" fill="none"/></svg>
<div class="t" style="left:118px;top:423px;font-size:11px;font-weight:normal;color:#474747;letter-spacing:-0.12px;">Device 1 (Optimal)</div>
<svg class="ic" style="left:100px;top:442px" width="16" height="17" viewBox="0 0 16 17"><path d="M0 6 L8 2 L16 4.5 L8 8.5 Z" fill="#c8ccd6" stroke="#555" stroke-width=".7"/><path d="M0 6 L8 8.5 L8 11 L0 8.5 Z" fill="#1c2a5a"/><path d="M8 8.5 L16 4.5 L16 7 L8 11 Z" fill="#505868"/><ellipse cx="8" cy="4.8" rx="3" ry="1.3" fill="none" stroke="#777" stroke-width=".6"/><circle cx="10.6" cy="10.2" r="6.6" fill="#fff" opacity=".6"/><circle cx="10.6" cy="10.2" r="5.8999999999999995" fill="url(#gchk)"/><path d="M7.5 10.1 L9.7 12.5 L13.8 7.799999999999999" stroke="#fff" stroke-width="1.9" fill="none"/></svg>
<div class="t" style="left:118px;top:450px;font-size:11px;font-weight:normal;color:#474747;letter-spacing:-0.12px;">Device 2 (Optimal)</div>
<svg class="ic" style="left:100px;top:469px" width="16" height="17" viewBox="0 0 16 17"><path d="M0 6 L8 2 L16 4.5 L8 8.5 Z" fill="#c8ccd6" stroke="#555" stroke-width=".7"/><path d="M0 6 L8 8.5 L8 11 L0 8.5 Z" fill="#1c2a5a"/><path d="M8 8.5 L16 4.5 L16 7 L8 11 Z" fill="#505868"/><ellipse cx="8" cy="4.8" rx="3" ry="1.3" fill="none" stroke="#777" stroke-width=".6"/><circle cx="10.6" cy="10.2" r="6.6" fill="#fff" opacity=".6"/><circle cx="10.6" cy="10.2" r="5.8999999999999995" fill="url(#gchk)"/><path d="M7.5 10.1 L9.7 12.5 L13.8 7.799999999999999" stroke="#fff" stroke-width="1.9" fill="none"/></svg>
<div class="t" style="left:118px;top:477px;font-size:11px;font-weight:normal;color:#474747;letter-spacing:-0.12px;">Device 3 (Optimal)</div>
<svg class="ic" style="left:73px;top:500px" width="8" height="5" viewBox="0 0 8 5"><path d="M0 0 H8 L4 4.5 Z" fill="#4a4a4a"/></svg>
<svg class="ic" style="left:84px;top:496px" width="16" height="17" viewBox="0 0 16 17"><path d="M0.5 12.5 L9 4.5" stroke="#2a3a6a" stroke-width="1.4"/><path d="M2 2.5 L6 5.5" stroke="#2a3a6a" stroke-width="1.2"/><path d="M5 5 L10.5 0.5 L16 1.8 L10.5 6 Z" fill="#2f9a40"/><path d="M5 5 L10.5 6 L10.5 7 L5 6 Z" fill="#1a5a24"/><circle cx="11" cy="10.8" r="6.6" fill="#fff" opacity=".6"/><circle cx="11" cy="10.8" r="5.8999999999999995" fill="url(#gchk)"/><path d="M7.9 10.700000000000001 L10.1 13.100000000000001 L14.2 8.4" stroke="#fff" stroke-width="1.9" fill="none"/></svg>
<div class="t" style="left:102px;top:504px;font-size:11px;font-weight:normal;color:#474747;letter-spacing:-0.12px;">Connector 1</div>
<svg class="ic" style="left:100px;top:523px" width="16" height="17" viewBox="0 0 16 17"><path d="M0 6 L8 2 L16 4.5 L8 8.5 Z" fill="#c8ccd6" stroke="#555" stroke-width=".7"/><path d="M0 6 L8 8.5 L8 11 L0 8.5 Z" fill="#1c2a5a"/><path d="M8 8.5 L16 4.5 L16 7 L8 11 Z" fill="#505868"/><ellipse cx="8" cy="4.8" rx="3" ry="1.3" fill="none" stroke="#777" stroke-width=".6"/><circle cx="10.6" cy="10.2" r="6.6" fill="#fff" opacity=".6"/><circle cx="10.6" cy="10.2" r="5.8999999999999995" fill="url(#gchk)"/><path d="M7.5 10.1 L9.7 12.5 L13.8 7.799999999999999" stroke="#fff" stroke-width="1.9" fill="none"/></svg>
<div class="t" style="left:118px;top:531px;font-size:11px;font-weight:normal;color:#474747;letter-spacing:-0.12px;">Device 0 (Optimal)</div>
<svg class="ic" style="left:100px;top:550px" width="16" height="17" viewBox="0 0 16 17"><path d="M0 6 L8 2 L16 4.5 L8 8.5 Z" fill="#c8ccd6" stroke="#555" stroke-width=".7"/><path d="M0 6 L8 8.5 L8 11 L0 8.5 Z" fill="#1c2a5a"/><path d="M8 8.5 L16 4.5 L16 7 L8 11 Z" fill="#505868"/><ellipse cx="8" cy="4.8" rx="3" ry="1.3" fill="none" stroke="#777" stroke-width=".6"/><circle cx="10.6" cy="10.2" r="6.6" fill="#fff" opacity=".6"/><circle cx="10.6" cy="10.2" r="5.8999999999999995" fill="url(#gchk)"/><path d="M7.5 10.1 L9.7 12.5 L13.8 7.799999999999999" stroke="#fff" stroke-width="1.9" fill="none"/></svg>
<div class="t" style="left:118px;top:558px;font-size:11px;font-weight:normal;color:#474747;letter-spacing:-0.12px;">Device 1 (Optimal)</div>
<svg class="ic" style="left:100px;top:577px" width="16" height="17" viewBox="0 0 16 17"><path d="M0 6 L8 2 L16 4.5 L8 8.5 Z" fill="#c8ccd6" stroke="#555" stroke-width=".7"/><path d="M0 6 L8 8.5 L8 11 L0 8.5 Z" fill="#1c2a5a"/><path d="M8 8.5 L16 4.5 L16 7 L8 11 Z" fill="#505868"/><ellipse cx="8" cy="4.8" rx="3" ry="1.3" fill="none" stroke="#777" stroke-width=".6"/><circle cx="10.6" cy="10.2" r="6.6" fill="#fff" opacity=".6"/><circle cx="10.6" cy="10.2" r="5.8999999999999995" fill="url(#gchk)"/><path d="M7.5 10.1 L9.7 12.5 L13.8 7.799999999999999" stroke="#fff" stroke-width="1.9" fill="none"/></svg>
<div class="t" style="left:118px;top:585px;font-size:11px;font-weight:normal;color:#474747;letter-spacing:-0.12px;">Device 2 (Optimal)</div>
<svg class="ic" style="left:100px;top:604px" width="16" height="17" viewBox="0 0 16 17"><path d="M0 6 L8 2 L16 4.5 L8 8.5 Z" fill="#c8ccd6" stroke="#555" stroke-width=".7"/><path d="M0 6 L8 8.5 L8 11 L0 8.5 Z" fill="#1c2a5a"/><path d="M8 8.5 L16 4.5 L16 7 L8 11 Z" fill="#505868"/><ellipse cx="8" cy="4.8" rx="3" ry="1.3" fill="none" stroke="#777" stroke-width=".6"/><circle cx="10.6" cy="10.2" r="6.6" fill="#fff" opacity=".6"/><circle cx="10.6" cy="10.2" r="5.8999999999999995" fill="url(#gchk)"/><path d="M7.5 10.1 L9.7 12.5 L13.8 7.799999999999999" stroke="#fff" stroke-width="1.9" fill="none"/></svg>
<div class="t" style="left:118px;top:612px;font-size:11px;font-weight:normal;color:#474747;letter-spacing:-0.12px;">Device 3 (Optimal)</div>
<div class="a" style="left:296px;top:132px;width:1144px;height:497px;border:1px solid #9a9a9a;border-radius:3px;background:#fff"></div>
<div class="a" style="left:297px;top:136px;width:1141px;height:33px;background:linear-gradient(#fbfbfb,#e6e6e6)"></div>
<div class="a" style="left:301px;top:141px;width:104px;height:28px;border:1px solid #9a9a9a;border-bottom:none;border-radius:3px 3px 0 0;background:#fff"></div>
<svg class="ic" style="left:314px;top:147px" width="15" height="16" viewBox="0 0 15 16"><path d="M0.5 0.5 H10 L13.5 4 V15.5 H0.5 Z" fill="#eef4fb" stroke="#8c9cb0" stroke-width="1"/><path d="M10 0.5 V4 H13.5" fill="#c8d8ea" stroke="#8c9cb0" stroke-width=".8"/><path d="M3 5.5 H11 M3 8.5 H11 M3 11.5 H11" stroke="#1e2e4a" stroke-width="1.2"/></svg>
<div class="t" style="left:341px;top:154px;font-size:11px;font-weight:bold;color:#3d4753;letter-spacing:0.15px;letter-spacing:0.15px;">Summary</div>
<div class="a" style="left:408px;top:141px;width:110px;height:28px;border:1px solid #9a9a9a;border-bottom:none;border-radius:3px 3px 0 0;background:linear-gradient(#f6f6f6,#d9d9d9)"></div>
<svg class="ic" style="left:420px;top:148px" width="16" height="16" viewBox="0 0 16 16"><circle cx="5.5" cy="5" r="4.3" fill="#eaf6f8" stroke="#6a7c80" stroke-width="1.3"/><path d="M9 8.8 L14.5 14" stroke="#2a3a6a" stroke-width="2.6" stroke-linecap="round"/></svg>
<div class="t" style="left:446px;top:154px;font-size:11px;font-weight:bold;color:#3d4753;letter-spacing:0.15px;letter-spacing:0.4px;">Resources</div>
<div class="a" style="left:520px;top:141px;width:87px;height:28px;border:1px solid #9a9a9a;border-bottom:none;border-radius:3px 3px 0 0;background:linear-gradient(#f6f6f6,#d9d9d9)"></div>
<svg class="ic" style="left:532px;top:147px" width="16" height="16" viewBox="0 0 16 16"><rect x="0.5" y="1" width="15" height="14.5" fill="#cfe6fa" stroke="#1f4a8a" stroke-width="1"/><rect x="0.5" y="1" width="15" height="3.5" fill="#1f4a8a"/><path d="M3 0 V2 M6 0 V2 M9 0 V2 M12 0 V2" stroke="#1f4a8a" stroke-width="1"/><path d="M1 7.5 H15 M1 10.5 H15 M1 13.5 H10 M4.5 5 V15 M8 5 V15" stroke="#8ab8e8" stroke-width="1"/><rect x="9.5" y="7" width="5.5" height="5" fill="#5a8ed0"/><rect x="10.5" y="12" width="4.5" height="3" fill="#e8fafa"/><path d="M13.5 8.5 A1.6 1.6 0 1 0 13.5 10.5" stroke="#e8f4ff" stroke-width=".9" fill="none"/></svg>
<div class="t" style="left:558px;top:154px;font-size:11px;font-weight:bold;color:#3d4753;letter-spacing:0.15px;letter-spacing:0.15px;">Events</div>
<div class="a" style="left:317px;top:184px;width:360px;height:432px;border:1px solid #707070;border-radius:0 17px 0 17px"></div>
<div class="a" style="left:325px;top:182px;width:106px;height:5px;background:#fff"></div>
<div class="t" style="left:327px;top:185px;font-size:11px;font-weight:bold;color:#444;letter-spacing:0.15px;letter-spacing:0.02px;">Logical Device Info</div>
<div class="a" style="left:688px;top:184px;width:360px;height:432px;border:1px solid #707070;border-radius:0 17px 0 17px"></div>
<div class="a" style="left:696px;top:182px;width:111px;height:5px;background:#fff"></div>
<div class="t" style="left:699px;top:185px;font-size:11px;font-weight:bold;color:#444;letter-spacing:0.15px;letter-spacing:0.12px;">Settings and Status</div>
<div class="a" style="left:1058px;top:184px;width:361px;height:432px;border:1px solid #707070;border-radius:0 17px 0 17px"></div>
<div class="a" style="left:1068px;top:182px;width:63px;height:5px;background:#fff"></div>
<div class="t" style="left:1069px;top:185px;font-size:11px;font-weight:bold;color:#444;letter-spacing:0.15px;letter-spacing:0.25px;">Resources</div>
<div class="t" style="left:336px;top:205px;font-size:11px;font-weight:normal;color:#474747;letter-spacing:-0.12px;">ID</div>
<div class="t" style="left:506px;top:205px;font-size:11px;font-weight:normal;color:#474747;letter-spacing:-0.12px;">0</div>
<div class="t" style="left:336px;top:225px;font-size:11px;font-weight:normal;color:#474747;letter-spacing:-0.12px;">Name</div>
<div class="t" style="left:506px;top:225px;font-size:11px;font-weight:normal;color:#474747;letter-spacing:-0.12px;">SYS</div>
<div class="t" style="left:336px;top:245px;font-size:11px;font-weight:normal;color:#474747;letter-spacing:-0.12px;">RAID Level</div>
<div class="t" style="left:506px;top:245px;font-size:11px;font-weight:normal;color:#474747;letter-spacing:-0.12px;">10</div>
<div class="t" style="left:336px;top:265px;font-size:11px;font-weight:normal;color:#474747;letter-spacing:-0.12px;">Stripe Size</div>
<div class="t" style="left:506px;top:265px;font-size:11px;font-weight:normal;color:#474747;letter-spacing:-0.12px;">256 KB</div>
<div class="t" style="left:336px;top:285px;font-size:11px;font-weight:normal;color:#474747;letter-spacing:-0.12px;">Data Space</div>
<div class="t" style="left:506px;top:285px;font-size:11px;font-weight:normal;color:#474747;letter-spacing:-0.12px;">1 023,989 GB</div>
<div class="t" style="left:336px;top:305px;font-size:11px;font-weight:normal;color:#474747;letter-spacing:-0.12px;">Parity Space</div>
<div class="t" style="left:506px;top:305px;font-size:11px;font-weight:normal;color:#474747;letter-spacing:-0.12px;">1 023,999 GB</div>
<div class="t" style="left:336px;top:325px;font-size:11px;font-weight:normal;color:#474747;letter-spacing:-0.12px;">Date Created</div>
<div class="t" style="left:506px;top:325px;font-size:11px;font-weight:normal;color:#474747;letter-spacing:-0.12px;">11/21/2014</div>
<div class="t" style="left:336px;top:345px;font-size:11px;font-weight:normal;color:#474747;letter-spacing:-0.12px;">Interface Type</div>
<div class="t" style="left:506px;top:345px;font-size:11px;font-weight:normal;color:#474747;letter-spacing:-0.12px;">Serial ATA</div>
<div class="t" style="left:336px;top:365px;font-size:11px;font-weight:normal;color:#474747;letter-spacing:-0.12px;">Partitioned</div>
<div class="t" style="left:506px;top:365px;font-size:11px;font-weight:normal;color:#474747;letter-spacing:-0.12px;">Yes</div>
<div class="t" style="left:336px;top:385px;font-size:11px;font-weight:normal;color:#474747;letter-spacing:-0.12px;">Bootable</div>
<div class="t" style="left:506px;top:385px;font-size:11px;font-weight:normal;color:#474747;letter-spacing:-0.12px;">Yes</div>
<div class="t" style="left:336px;top:405px;font-size:11px;font-weight:normal;color:#474747;letter-spacing:-0.12px;">Member Device(s) Block Size</div>
<div class="t" style="left:506px;top:405px;font-size:11px;font-weight:normal;color:#474747;letter-spacing:-0.12px;">512 Bytes</div>
<div class="t" style="left:337px;top:522px;font-size:11px;font-weight:bold;color:#2323b8;letter-spacing:0.15px;letter-spacing:0.15px;">Advanced Statistics</div>
<div class="t" style="left:722px;top:205px;font-size:11px;font-weight:normal;color:#474747;letter-spacing:-0.12px;">Status</div>
<div class="t" style="left:884px;top:205px;font-size:11px;font-weight:normal;color:#474747;letter-spacing:-0.12px;">Degraded</div>
<div class="t" style="left:722px;top:226px;font-size:11px;font-weight:normal;color:#474747;letter-spacing:-0.12px;">Additional Details</div>
<div class="t" style="left:884px;top:226px;font-size:11px;font-weight:normal;color:#474747;letter-spacing:-0.12px;">Quick Initialized</div>
<div class="t" style="left:722px;top:246px;font-size:11px;font-weight:normal;color:#474747;letter-spacing:-0.12px;">Protected by Hot Spare</div>
<div class="t" style="left:884px;top:246px;font-size:11px;font-weight:normal;color:#474747;letter-spacing:-0.12px;">No</div>
<div class="t" style="left:722px;top:266px;font-size:11px;font-weight:normal;color:#474747;letter-spacing:-0.12px;">Failed Stripes</div>
<div class="t" style="left:884px;top:266px;font-size:11px;font-weight:normal;color:#474747;letter-spacing:-0.12px;">No</div>
<div class="t" style="left:706px;top:286px;font-size:11px;font-weight:bold;color:#4a4a4a;letter-spacing:0.15px;letter-spacing:0.35px;">Controller Cache</div>
<div class="t" style="left:722px;top:306px;font-size:11px;font-weight:normal;color:#474747;letter-spacing:-0.12px;">Read-Cache Status</div>
<div class="t" style="left:886px;top:306px;font-size:11px;font-weight:normal;color:#474747;letter-spacing:-0.12px;">On</div>
<div class="t" style="left:722px;top:326px;font-size:11px;font-weight:normal;color:#474747;letter-spacing:-0.12px;">Write-Cache Status</div>
<div class="t" style="left:886px;top:326px;font-size:11px;font-weight:normal;color:#474747;letter-spacing:-0.12px;">On (write-back)</div>
<div class="t" style="left:722px;top:346px;font-size:11px;font-weight:normal;color:#474747;letter-spacing:-0.12px;">Write-Cache Mode</div>
<div class="t" style="left:886px;top:346px;font-size:11px;font-weight:normal;color:#474747;letter-spacing:-0.12px;">Enabled (Write Back when ...</div>
<div class="t" style="left:706px;top:366px;font-size:11px;font-weight:bold;color:#4a4a4a;letter-spacing:0.15px;letter-spacing:0.35px;">Intelligent Power Management</div>
<div class="t" style="left:722px;top:386px;font-size:11px;font-weight:normal;color:#474747;letter-spacing:-0.12px;">Power Status</div>
<div class="t" style="left:886px;top:386px;font-size:11px;font-weight:normal;color:#474747;letter-spacing:-0.12px;">Disabled</div>
<div class="t" style="left:706px;top:406px;font-size:11px;font-weight:bold;color:#4a4a4a;letter-spacing:0.15px;letter-spacing:0.35px;">maxCache</div>
<div class="t" style="left:722px;top:426px;font-size:11px;font-weight:normal;color:#474747;letter-spacing:-0.12px;">Read-Cache Status</div>
<div class="t" style="left:886px;top:426px;font-size:11px;font-weight:normal;color:#474747;letter-spacing:-0.12px;">On</div>
<div class="t" style="left:722px;top:446px;font-size:11px;font-weight:normal;color:#474747;letter-spacing:-0.12px;">Read-Cache Mode</div>
<div class="t" style="left:886px;top:446px;font-size:11px;font-weight:normal;color:#474747;letter-spacing:-0.12px;">Enabled</div>
<div class="t" style="left:722px;top:466px;font-size:11px;font-weight:normal;color:#474747;letter-spacing:-0.12px;">Write-Cache Status</div>
<div class="t" style="left:886px;top:466px;font-size:11px;font-weight:normal;color:#474747;letter-spacing:-0.12px;">On</div>
<div class="t" style="left:722px;top:486px;font-size:11px;font-weight:normal;color:#474747;letter-spacing:-0.12px;">Write-Cache Mode</div>
<div class="t" style="left:886px;top:486px;font-size:11px;font-weight:normal;color:#474747;letter-spacing:-0.12px;">Enabled</div>
<div class="t" style="left:1078px;top:204px;font-size:11px;font-weight:bold;color:#4a4a4a;letter-spacing:0.15px;letter-spacing:0.4px;">Member Devices</div>
<div class="t" style="left:1093px;top:224px;font-size:11px;font-weight:normal;color:#474747;letter-spacing:-0.12px;">Group 0, segment 0 - Device 2 ( ...</div>
<div class="t" style="left:1286px;top:224px;font-size:11px;font-weight:normal;color:#474747;letter-spacing:-0.12px;">Present</div>
<div class="t" style="left:1093px;top:244px;font-size:11px;font-weight:normal;color:#474747;letter-spacing:-0.12px;">Group 0, segment 1 - Device 3 ( ...</div>
<div class="t" style="left:1286px;top:244px;font-size:11px;font-weight:normal;color:#474747;letter-spacing:-0.12px;">Present</div>
<div class="t" style="left:1093px;top:264px;font-size:11px;font-weight:normal;color:#474747;letter-spacing:-0.12px;">Group 1, segment 0 - Device 0 ( ...</div>
<div class="t" style="left:1286px;top:264px;font-size:11px;font-weight:normal;color:#474747;letter-spacing:-0.12px;">Present</div>
<div class="t" style="left:1093px;top:284px;font-size:11px;font-weight:normal;color:#474747;letter-spacing:-0.12px;">Group 1, segment 1 -- (- )</div>
<div class="t" style="left:1286px;top:284px;font-size:11px;font-weight:normal;color:#474747;letter-spacing:-0.12px;">Missing</div>
<div class="t" style="left:1093px;top:304px;font-size:11px;font-weight:normal;color:#474747;letter-spacing:-0.12px;">Group 2, segment 0 - Device 2 ( ...</div>
<div class="t" style="left:1286px;top:304px;font-size:11px;font-weight:normal;color:#474747;letter-spacing:-0.12px;">Present</div>
<div class="t" style="left:1093px;top:324px;font-size:11px;font-weight:normal;color:#474747;letter-spacing:-0.12px;">Group 2, segment 1 - Device 3 ( ...</div>
<div class="t" style="left:1286px;top:324px;font-size:11px;font-weight:normal;color:#474747;letter-spacing:-0.12px;">Present</div>
<div class="a" style="left:0;top:635px;width:1484px;height:1px;background:#a8a8a8"></div>
<div class="a" style="left:0;top:636px;width:1484px;height:37px;background:linear-gradient(#fdfdfd,#e6e6e6)"></div>
<div class="a" style="left:-4px;top:646px;width:89px;height:27px;border:1px solid #9a9a9a;border-bottom:none;border-radius:3px 3px 0 0;background:#fff"></div>
<div class="a" style="left:87px;top:646px;width:83px;height:27px;border:1px solid #9a9a9a;border-bottom:none;border-radius:3px 3px 0 0;background:linear-gradient(#f6f6f6,#d9d9d9)"></div>
<svg class="ic" style="left:10px;top:652px" width="16" height="16" viewBox="0 0 16 16"><rect x="0.5" y="1" width="15" height="14.5" fill="#cfe6fa" stroke="#1f4a8a" stroke-width="1"/><rect x="0.5" y="1" width="15" height="3.5" fill="#1f4a8a"/><path d="M3 0 V2 M6 0 V2 M9 0 V2 M12 0 V2" stroke="#1f4a8a" stroke-width="1"/><path d="M1 7.5 H15 M1 10.5 H15 M1 13.5 H10 M4.5 5 V15 M8 5 V15" stroke="#8ab8e8" stroke-width="1"/><rect x="9.5" y="7" width="5.5" height="5" fill="#5a8ed0"/><rect x="10.5" y="12" width="4.5" height="3" fill="#e8fafa"/><path d="M13.5 8.5 A1.6 1.6 0 1 0 13.5 10.5" stroke="#e8f4ff" stroke-width=".9" fill="none"/></svg>
<div class="t" style="left:36px;top:659px;font-size:11px;font-weight:bold;color:#3d4753;letter-spacing:0.15px;letter-spacing:0.15px;">Events</div>
<svg class="ic" style="left:101px;top:652px" width="14" height="16" viewBox="0 0 14 16"><rect x="1" y="2.2" width="11.5" height="13.3" fill="#fbfcfe" stroke="#1a2444" stroke-width="1.5"/><path d="M4 3 L5 1 H8.5 L9.5 3 Z" fill="#1a2444"/><path d="M3 5.5 L4 6.5 L5.5 4.5 M3 8.5 L4 9.5 L5.5 7.5 M3 11.5 L4 12.5 L5.5 10.5" stroke="#1a2444" stroke-width="1" fill="none"/><path d="M6.5 5.8 H10 M6.5 8.8 H10" stroke="#1a2444" stroke-width=".9"/><path d="M8.5 15 L12.5 11 V15 Z" fill="#1a2444"/></svg>
<div class="t" style="left:126px;top:659px;font-size:11px;font-weight:bold;color:#3d4753;letter-spacing:0.15px;letter-spacing:0.3px;">Tasks</div>
<div class="a" style="left:11px;top:684px;width:1480px;height:10px;border:1px solid #9a9a9a;background:linear-gradient(#fafafa,#eeeeee)"></div>
<div class="a" style="left:156px;top:685px;width:1px;height:6px;background:#a0a0a0"></div>
<div class="a" style="left:362px;top:685px;width:1px;height:6px;background:#a0a0a0"></div>
<div class="a" style="left:537px;top:685px;width:1px;height:6px;background:#a0a0a0"></div>
<div class="a" style="left:713px;top:685px;width:1px;height:6px;background:#a0a0a0"></div>
<div class="a" style="left:888px;top:685px;width:1px;height:6px;background:#a0a0a0"></div>
<svg class="ic" style="left:104px;top:688px" width="7" height="4" viewBox="0 0 7 4"><path d="M1 4 L3.5 0.5 L6 4 Z" fill="#2a5a8a"/></svg>
<svg class="ic" style="left:296px;top:688px" width="7" height="4" viewBox="0 0 7 4"><path d="M1 4 L3.5 0.5 L6 4 Z" fill="#2a5a8a"/></svg>
<svg class="ic" style="left:469px;top:688px" width="7" height="4" viewBox="0 0 7 4"><path d="M1 4 L3.5 0.5 L6 4 Z" fill="#2a5a8a"/></svg>
<svg class="ic" style="left:644px;top:688px" width="7" height="4" viewBox="0 0 7 4"><path d="M1 4 L3.5 0.5 L6 4 Z" fill="#2a5a8a"/></svg>
<svg class="ic" style="left:831px;top:688px" width="7" height="4" viewBox="0 0 7 4"><path d="M1 4 L3.5 0.5 L6 4 Z" fill="#2a5a8a"/></svg>
<svg class="ic" style="left:1307px;top:688px" width="7" height="4" viewBox="0 0 7 4"><path d="M1 4 L3.5 0.5 L6 4 Z" fill="#2a5a8a"/></svg>
</body></html>
